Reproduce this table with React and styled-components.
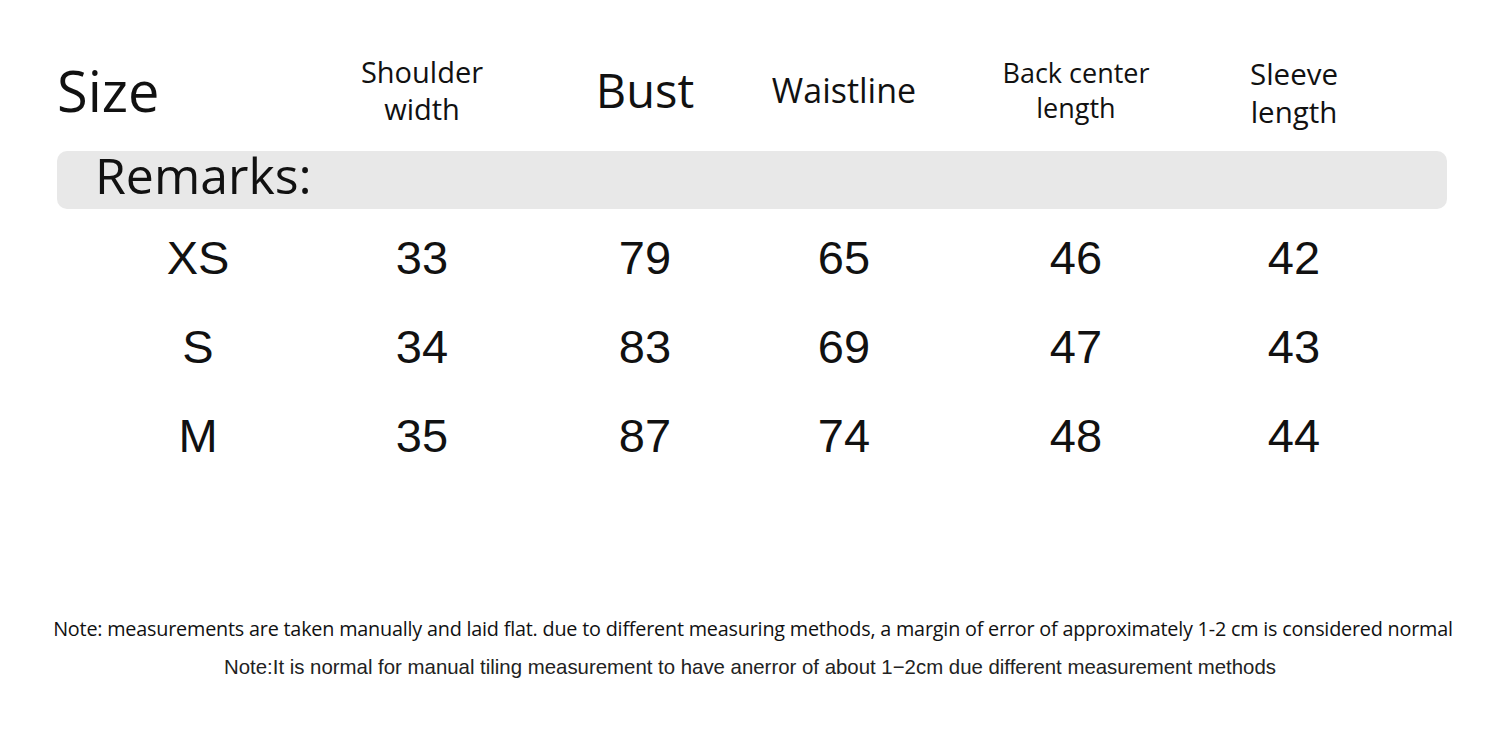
import React from "react";
import styled, { createGlobalStyle } from "styled-components";

const GlobalStyle = createGlobalStyle`
  html, body {
    margin: 0;
    padding: 0;
    background: #ffffff;
  }
  body {
    font-family: "Open Sans", "Noto Sans", sans-serif;
    color: #111;
  }
`;

const Page = styled.div`
  width: 1500px;
  height: 753px;
  box-sizing: border-box;
  padding: 50px 53px 0 57px;
  display: flex;
  flex-direction: column;
`;

const COLS = "253px 224px 222px 176px 288px 148px";

const HeaderRow = styled.div`
  display: grid;
  grid-template-columns: ${COLS};
  height: 80px;
  align-items: center;
`;

const HeadCell = styled.div`
  font-family: "Open Sans", "Noto Sans", sans-serif;
  font-size: ${(p) => p.size}px;
  line-height: ${(p) => p.lh || 1.2};
  text-align: ${(p) => (p.left ? "left" : "center")};
  color: #111;
  margin-top: ${(p) => p.shift || 0}px;
`;

const RemarksBar = styled.div`
  margin-top: 21px;
  width: 1390px;
  height: 58px;
  border-radius: 10px;
  background: #e8e8e8;
  box-sizing: border-box;
  padding: 0 0 10px 38px;
  display: flex;
  align-items: center;
  font-size: 50px;
  line-height: 1;
  color: #111;
`;

const Rows = styled.div`
  margin-top: 4px;
  display: flex;
  flex-direction: column;
`;

const DataRow = styled.div`
  display: grid;
  grid-template-columns: ${COLS};
  height: 89px;
  align-items: center;
`;

const DataCell = styled.div`
  font-family: "Liberation Sans", Arial, sans-serif;
  font-size: 47px;
  line-height: 1;
  text-align: center;
  color: #111;
  padding-left: ${(p) => (p.first ? 29 : 0)}px;
`;

const Notes = styled.div`
  margin-top: 137px;
  display: flex;
  flex-direction: column;
  align-items: center;
  margin-left: -57px;
  margin-right: -53px;
`;

const NoteOne = styled.div`
  font-family: "Open Sans", "Noto Sans", sans-serif;
  font-size: 19.8px;
  line-height: 24px;
  letter-spacing: -0.2px;
  color: #111;
  white-space: nowrap;
  transform: translateX(3px);
`;

const NoteTwo = styled.div`
  margin-top: 14px;
  font-family: "Liberation Sans", Arial, sans-serif;
  font-size: 20.4px;
  line-height: 24px;
  color: #222;
  white-space: nowrap;
`;

const headers = [
  { text: "Size", size: 56, left: true },
  { text: ["Shoulder", "width"], size: 29, lh: 1.28 },
  { text: "Bust", size: 47 },
  { text: "Waistline", size: 34 },
  { text: ["Back center", "length"], size: 27, lh: 1.3 },
  { text: ["Sleeve", "length"], size: 29.5, lh: 1.28, shift: 5 },
];

const rows = [
  ["XS", "33", "79", "65", "46", "42"],
  ["S", "34", "83", "69", "47", "43"],
  ["M", "35", "87", "74", "48", "44"],
];

export default function App() {
  return (
    <>
      <GlobalStyle />
      <Page>
        <HeaderRow>
          {headers.map((h, i) => (
            <HeadCell key={i} size={h.size} lh={h.lh} left={h.left} shift={h.shift}>
              {Array.isArray(h.text)
                ? h.text.map((line) => <div key={line}>{line}</div>)
                : h.text}
            </HeadCell>
          ))}
        </HeaderRow>
        <RemarksBar>Remarks:</RemarksBar>
        <Rows>
          {rows.map((r) => (
            <DataRow key={r[0]}>
              {r.map((v, j) => (
                <DataCell key={j} first={j === 0}>
                  {v}
                </DataCell>
              ))}
            </DataRow>
          ))}
        </Rows>
        <Notes>
          <NoteOne>
            Note: measurements are taken manually and laid flat. due to different measuring
            methods, a margin of error of approximately 1-2 cm is considered normal
          </NoteOne>
          <NoteTwo>
            Note:It is normal for manual tiling measurement to have anerror of about 1−2cm due
            different measurement methods
          </NoteTwo>
        </Notes>
      </Page>
    </>
  );
}
